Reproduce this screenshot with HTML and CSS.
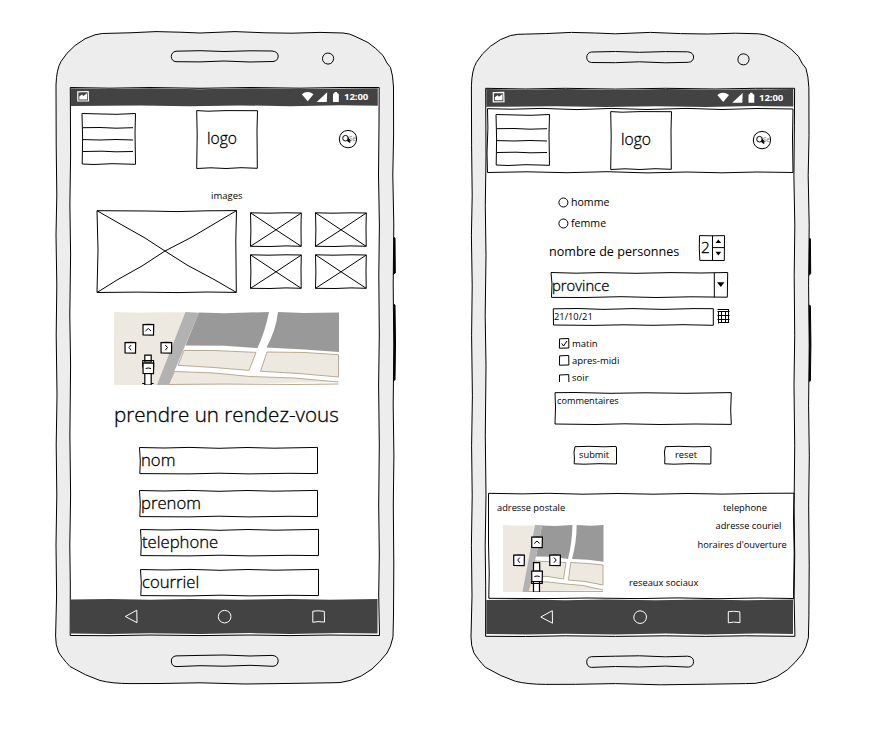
FILE: index.html
```
<!DOCTYPE html>
<html lang="fr">
<head>
<meta charset="utf-8">
<title>Maquette mobile</title>
<link rel="stylesheet" href="styles.css">
</head>
<body>
<svg class="defs" width="0" height="0" aria-hidden="true">
  <defs>
    <g id="shell">
      <path fill="#000" d="M343 212.500l2 .5 .3 35-2 1.500zM343 279l2 1 .5 38-.5 37-2 .5z"/>
      <path class="case" d="M6 60Q6.500 44 11 36.500Q16 28 25 20.500Q35 12.500 45 9.800Q52 8 60 8.300L80 7.800 106 6.600 130 7.200 150 8 185 6.600 215 7.800 242 8.200 270 7.400 293 8Q300 8.500 305 11.300L318 17.500Q326 23 333 30.500L337 38 340.500 42.500Q343 50 343.500 62L343.600 110 342.800 150 343.800 200 343.200 260 343.800 320 343.200 380 343.900 430 343.300 480 343.800 540 343.500 590 343 612Q341 622 337 628Q330 637 322 644Q312 652 300 655.500Q290 658.500 280 657.800L242 658.400 195 659 150 657.800 110 658.500 80 658.600Q62 658.500 50 655.500Q36 651 20 641.500Q12 633 8.500 627Q5.500 620 5.600 611L6.600 570 6 520 6.800 470 6.200 420 7 370 6.200 310 6.800 260 6 210 6.800 170 6.200 120z"/>
      <path d="M126 26.200L150 25.700 174 26.500 200 25.800 222 26Q228 26.500 228.200 31.200Q228 36 223 36.500L200 37 174 36 150 36.900 126 36.700Q121.300 36 121.300 31.500Q121.500 27 126 26.200zM126 630.900L150 630.400 174 630 200 631 222 630.400Q228 630.800 228.200 635.800Q228 640.800 223 641.300L200 640.300 174 641.200 150 640.700 126 641.600Q121.300 641 121.300 636Q121.500 631.500 126 630.900zM277.800 28Q283.500 28.500 283.700 33.500Q283 38.900 278 39.100Q272.500 38.500 272.500 33.500Q273 28.500 277.800 28z"/>
      <path class="white" d="M20.300 62.500L60 63.200 100 62.500 150 63.300 200 62.500 250 63.200 290 62.500 329.200 62.500 329 100 328.500 150 329.400 200 328.800 250 329.300 310 328.600 360 329.300 420 328.700 480 329.300 530 328.700 570 329.500 610.500 280 610 240 610.600 200 610 150 610.600 100 610 60 610.700 20.200 610.500 20.300 560 19.800 520 20.600 470 19.900 410 20.600 340 19.800 290 20.600 230 19.900 180 20.600 130z"/>
    </g>
    <g id="status">
      <path class="darkbar" d="M.8 1.300L40 2 80 1.200 130 2.200 180 1.200 230 2 307.800 1.300 307.800 18.800 270 18.300 220 19.200 170 18.400 120 19.200 70 18.500 .8 19z"/>
      <path fill="none" stroke="#fff" stroke-width="1.200" d="M7.800 4.800l10.400-.3 .3 9.300-10.700 .2z"/>
      <path fill="#fff" stroke="none" d="M9.300 12.500V9.500L12 7.500 13.500 9 17 6.200V12.500zM231.800 7.200Q237.500 2.800 243.500 7.200L237.700 14.300zM246.700 15L257.200 5.200 256.800 15zM263 15V7L264.500 6V5H267V6L268.800 7V15z"/>
    </g>
    <g id="nav">
      <path class="darkbar" d="M.8 .5L40 0 80 .7 120 0 170 .8 220 0 260 .7 307.500 0 307.500 34.500 270 34 220 34.900 180 34.100 130 35 80 34.200 40 35 .8 34.500z"/>
      <path fill="none" stroke="#fff" d="M55.300 17.500L66.800 11.200 67 23.700zM154.500 11.300Q160.700 12 161 17.500Q160.500 23.500 154.500 24Q148.300 23 148.300 17.500Q149 11.800 154.500 11.300zM242.800 12.200L248 11.800 254.300 12.300 254.500 23.100 248 22.600 242.800 23.300z"/>
    </g>
    <path id="menu" d="M0 .5L20 1 35 1.300 53.500 .5 53 20 53.500 51.300 30 50.700 12 51.500 .2 51 .6 25zM1 14.700L18 14.500 34 15.200 51 14.700M1 26.600L18 27 34 26.500 51 27M1 38.500L20 38.200 34 38.800 51 38.500"/>
    <path id="logo" d="M.7 .6L12 1.200 30 .6 61.500 .7 61 20 61.300 58.300 45 57.700 30 58.500 15 57.800 .7 58.500 1.200 25z"/>
    <g id="search">
      <path d="M10 1.400Q18.500 2 18.600 10Q18 18.500 10 18.800Q1.500 18 1.300 10Q2 2 10 1.400z"/>
      <circle cx="7.500" cy="9.200" r="2.800"/><path stroke-width="1.500" d="M9.500 11.200L12.200 13.500"/><path fill="#000" stroke="none" d="M9.500 8L9.800 12.500 13.500 12z"/>
    </g>
    <path id="thumb" d="M.5 .8L18 1.200 36 .8 51.300 1 51 15 51.200 34.300 36 33.900 20 34.500 .5 34.300 .9 18zM.5 .8L26 17.800 51.200 34.300M51.300 1L26 17.800 .5 34.300"/>
    <path id="field" d="M.5 .5L25 1 50 .4 80 1.300 108 .5 135 1.200 178.500 .4V26.600L150 26.300 110 26.900 80 26.200 50 26.900 .8 26.600 1.300 14z"/>
    <path id="tick" d="M.6 .8L9.700 .5 9.900 10 .4 10.200z"/>
    <path id="pan" class="white" stroke-width="1.200" d="M.5 .6L6 .3 11.200 .6 11 11.200 .6 11z"/>
  </defs>
</svg>
<main class="board">
  <section class="phone">
    <svg class="shell" width="350" height="665"><use href="#shell"/></svg>
    <div class="screen">
      <div class="status"><svg class="back" width="309" height="19"><use href="#status"/></svg><span>12:00</span></div>
      <div class="content">
        <header class="top">
          <svg class="menu" width="54" height="52"><use href="#menu"/></svg>
          <div class="logo"><svg class="back" width="62" height="60"><use href="#logo"/></svg>logo</div>
          <div class="search"><svg class="back" width="20" height="20"><use href="#search"/></svg><span>Se</span></div>
        </header>
        <p class="caption">images</p>
        <div class="gallery">
          <svg width="140" height="83"><path d="M0 .7L50 1 80 1.600 110 .8 139.500 .6 138.800 30 139.300 82.400 110 82 80 82.600 40 82.100 0 82.500 1 40zM0 .7L25 15 48 28 68 41 90 55 118 70 139.300 82.400M139.500 .6L95 27 68 41 45 56 20 70 0 82.500"/></svg>
          <div class="thumbs">
            <svg width="52" height="35"><use href="#thumb"/></svg>
            <svg width="52" height="35"><use href="#thumb"/></svg>
            <svg width="52" height="35"><use href="#thumb"/></svg>
            <svg width="52" height="35"><use href="#thumb"/></svg>
          </div>
        </div>
        <svg class="map" width="225" height="73">
          <g stroke="none">
            <path fill="#ede8e0" d="M0 0L25 .8 50 .3H72V73H0z"/>
            <path fill="#fff" d="M80 0H225V73H54z"/>
            <path fill="#b2b2b2" d="M71.500 0L85 .7 54.500 73H43z"/>
            <path fill="#999" d="M85 .5L110 1.200 155 0Q151 20 143.500 36L110 33.800 71.500 33.500zM164 0L190 1 225 .4V40L190 37.500 152.500 35.500Q162 18 164 0z"/>
          </g>
          <path class="plot" d="M70 38.500L100 38.500 142 40.400 135 58.400 100 55.500 64 53.300zM153 40L190 40.500 224.500 42.700V65L185 61.500 146.500 59.300zM54.500 72.500L60.500 59.500 100 61 136 64.500 180 66 224.500 70M55 72.500L110 72 180 72.500 224.500 72"/>
          <use href="#pan" x="28.500" y="12"/><use href="#pan" x="10.500" y="30"/><use href="#pan" x="46.500" y="30"/>
          <path class="white" stroke-width="1.200" d="M28.800 48.500H39.500V55H28.800zM30.800 43.200H37.200V50H30.800zM30.800 60H37.200V73H30.800zM28.800 72V71.500H30.500M37 71.500H39.500"/>
          <use href="#pan" x="28.500" y="50.500"/>
          <path d="M31.500 19L34.300 16.500 37 19M17.200 33L15 35.500 17.200 38.300M51.200 33L53.500 35.500 51.200 38.300M31.700 56.500Q34.300 55.500 37 56.500"/>
        </svg>
        <h1>prendre un rendez-vous</h1>
        <div class="fields">
          <div class="field"><svg class="back" width="179" height="28"><use href="#field"/></svg>nom</div>
          <div class="field second"><svg class="back" width="179" height="28"><use href="#field"/></svg>prenom</div>
          <div class="field shifted"><svg class="back" width="179" height="28"><use href="#field"/></svg>telephone</div>
          <div class="field shifted last"><svg class="back" width="179" height="28"><use href="#field"/></svg>courriel</div>
        </div>
      </div>
      <svg class="nav" width="309" height="36"><use href="#nav"/></svg>
    </div>
  </section>

  <section class="phone">
    <svg class="shell" width="350" height="665"><use href="#shell" transform="translate(.4 .8)"/></svg>
    <div class="screen">
      <div class="status low"><svg class="back" width="309" height="20"><use href="#status" transform="translate(.5 .8)"/></svg><span>12:00</span></div>
      <div class="content">
        <header class="top boxed">
          <svg class="back" width="308" height="66"><path d="M.5 .7L25 1.200 55 .4 90 1.600 125 .4 160 1.500 200 .4 235 1.500 270 .5 306 1 305.500 30 306 64.500 270 64 235 64.800 200 64 160 64.900 120 63.700 80 64.700 40 63.800 .5 64.500 0 45 .9 20z"/></svg>
          <svg class="menu" width="54" height="52"><use href="#menu"/></svg>
          <div class="logo"><svg class="back" width="62" height="60"><use href="#logo"/></svg>logo</div>
          <div class="search"><svg class="back" width="20" height="20"><use href="#search"/></svg><span>Se</span></div>
        </header>
        <div class="radios">
          <label><svg width="11" height="11"><circle cx="5.400" cy="5.500" r="4.500"/></svg>homme</label>
          <label><svg width="11" height="11"><circle cx="5.400" cy="5.500" r="4.500"/></svg>femme</label>
        </div>
        <div class="count">
          <span class="label">nombre de personnes</span>
          <div class="spinner"><svg class="back" width="26" height="27"><path d="M.5 .6L14 .8 25.500 .6 25.300 25.500 .8 25.400 .3 13zM13.500 .7V25.500M13.500 12.600H25.500"/><path class="solid" d="M16.500 8L19.300 4.500 22.200 8zM16.500 16.800L19.300 20.500 22.200 16.800z"/></svg>2</div>
        </div>
        <div class="select"><svg class="back" width="178" height="26"><path d="M0 .5L25 1.200 50 .6 85 1.300 120 .6 150 1 176.700 .5 176.300 25.200 140 24.800 105 25.500 70 24.700 35 25.500 .5 25.400 1 12zM163.300 .7V25.400"/><path class="solid" d="M166 10.300H173.500L169.800 15z"/></svg>province</div>
        <div class="date">
          <div class="dateinput"><svg class="back" width="162" height="18"><path d="M.3 .8L25 .5 50 1.400 80 .6 110 1.400 140 .6 160.300 .7V17.300L130 16.700 100 17.300 70 16.800 40 17.400 .5 17z"/></svg>21/10/21</div>
          <svg class="calendar" width="13" height="16"><path d="M.5 1.500H12M1.500 4V15.500M.5 3.500H12.500M.5 7.500H12.500M.5 11.500H12.500M1 14.500H12M4.500 3.500V14.500M8.500 3.500V14.500M11.500 1V14.500"/></svg>
        </div>
        <div class="checks">
          <label><svg width="11" height="11"><use href="#tick"/><path d="M2.700 5.500L4.500 8 8 3"/></svg>matin</label>
          <label><svg width="11" height="11"><use href="#tick"/></svg>apres-midi</label>
          <label><svg width="11" height="11"><path d="M.5 9V2L9.700 1.600 9.900 9"/></svg>soir</label>
        </div>
        <div class="comment"><svg class="back" width="178" height="33"><path d="M0 .7L20 .5 55 1.300 90 .8 130 1.300 176.300 .6 175.700 18 176.300 32.400 140 32 105 32.500 70 31.800 40 32.500 0 32 .5 15z"/></svg>commentaires</div>
        <div class="buttons">
          <div class="button"><svg class="back" width="44" height="19"><path d="M1 .7L15 .3 30 .8 42 .4 42.500 2V18L25 17.700 10 18.200 .2 17.800 .4 12 0 6z"/></svg>submit</div>
          <div class="button reset"><svg class="back" width="48" height="19"><path d="M1.500 .7L15 .3 30 .8 46 .4 47 2 46.800 18 25 17.700 10 18.200 .7 17.800 .9 12 .4 6z"/></svg>reset</div>
        </div>
        <footer class="foot">
          <svg class="back" width="307" height="106"><path d="M.5 .3L35 .9 60 .3 95 1.200 130 .5 165 1.200 200 .5 235 1.100 275 .3 306 .2 305.500 25 306.200 60 305.500 105.500 270 105 230 105.700 190 104.900 150 105.600 100 105 60 105.600 .8 105.300 1.200 80 .5 50z"/></svg>
          <div class="address">
            <span>adresse postale</span>
            <svg class="map" width="101" height="67">
              <g stroke="none">
                <path fill="#ede8e0" d="M0 0L15 .8 38 0V67H0z"/><path fill="#fff" d="M38 0H101V67H26z"/>
                <path fill="#b2b2b2" d="M32 0H39L26 67H19.500z"/>
                <path fill="#999" d="M39 .5L52 1 69.500 0Q69 18 65 34L50 31.800 33 31.500zM73.700 0L88 .7 100.500 0V36.700L85 34.700 69 34Q73.500 18 73.700 0z"/>
              </g>
              <path class="plot" d="M32 36L63 37.500 60.500 54 45 51.500 29 51zM67.700 37.500L85 38.500 100 40V60L82 56.500 65.500 55zM25 66.500L28 56 45 57 63 59 80 60.500 100 65M25 66.500H100"/>
              <path class="white" stroke-width="1.200" d="M30.500 37.700H36.700V47H30.500zM28.700 56V58.500H39.200V56M30.500 56.500V67H36.500V56.500z"/>
              <use href="#pan" x="28.200" y="11.500"/><use href="#pan" x="10.200" y="29.500"/><use href="#pan" x="46.200" y="29.500"/><use href="#pan" x="28.200" y="45.500"/>
              <path d="M31.200 18.500L34 16 36.700 18.500M16.900 32.500L14.700 35 16.900 37.800M50.900 32.500L53.200 35 50.900 37.800M31.400 51.500Q34 50.500 36.700 51.500"/>
            </svg>
          </div>
          <span class="social">reseaux sociaux</span>
          <div class="contact">
            <span>telephone</span>
            <span class="mail">adresse couriel</span>
            <span class="hours">horaires d'ouverture</span>
          </div>
        </footer>
      </div>
      <svg class="nav" width="309" height="36"><use href="#nav" transform="translate(.5 .5)"/></svg>
    </div>
  </section>
</main>
</body>
</html>
```
FILE: styles.css
```
* { box-sizing: border-box; }
body { margin: 0; background: #fff; color: #000; font: 9.3px/14px "Open Sans", "Noto Sans", sans-serif; overflow: hidden; }
p, h1 { margin: 0; }
svg { display: block; flex: none; overflow: visible; fill: none; stroke: #000; stroke-width: 1; }
.defs { position: absolute; }
.case { fill: #ededed; }
.white { fill: #fff; }
.solid { fill: #000; stroke: none; }
.darkbar { fill: #434343; stroke: none; }
.plot { fill: #ede8e0; stroke: #b9aa94; }
.map { overflow: hidden; }

.board { display: flex; gap: 65px; width: 885px; height: 731px; padding: 25px 0 0 50px; }
.phone { position: relative; width: 350px; height: 665px; padding: 62px 0 0 20px; flex: none; }
.shell { position: absolute; left: 0; top: 0; }
.screen { position: relative; display: flex; flex-direction: column; width: 309px; height: 549px; }
.back { position: absolute; left: 0; top: 0; z-index: -1; }
.screen, .status, .logo, .search, .field, .top, .spinner, .select, .dateinput, .comment, .button, .foot { isolation: isolate; }

.status { position: relative; height: 19px; padding-left: 274px; color: #fff; font-size: 9.6px; font-weight: 700; line-height: 20px; letter-spacing: -.1px; }
.status.low { line-height: 21px; }
.content { display: flex; flex-direction: column; height: 493px; }

/* Larger labels: light face with a slight stroke for a medium-light weight */
.logo, .field, .spinner, .select, h1 { font-weight: 300; -webkit-text-stroke: .3px #000; }

.top { position: relative; display: flex; align-items: flex-start; height: 66px; padding: 4px 0 0 12px; flex: none; }
.top .menu { margin-top: 3px; }
.logo { position: relative; width: 62px; height: 60px; margin-left: 60px; padding-left: 11px; font-size: 15.6px; line-height: 57px; }
.search { position: relative; width: 20px; height: 20px; margin: 19px 0 0 80px; padding-left: 11px; color: #777; font-size: 6.5px; line-height: 20px; }
.boxed { width: 307px; height: 65px; margin: 2px 0 0 2px; padding: 3px 0 0 9px; }

.caption { margin-top: 17px; padding-left: 141px; font-size: 9.5px; }
.gallery { display: flex; margin-top: 7px; padding-left: 27px; height: 83px; }
.thumbs { display: grid; grid-template-columns: 52px 52px; grid-template-rows: 35px 35px; gap: 7px 12.500px; margin: 2px 0 0 13px; }
.content > .map { margin: 19px 0 0 44px; }
h1 { margin-top: 15px; padding-left: 44px; font-size: 20.6px; line-height: 28px; white-space: nowrap; }
.fields { padding: 19px 0 0 69px; }
.field { position: relative; width: 179px; height: 28px; padding-left: 2px; font-size: 16.7px; line-height: 26px; }
.field.second { margin-top: 15px; }
.field.shifted { margin: 11px 0 0 1px; }
.field.shifted.last { margin-top: 12px; }

.radios { display: flex; flex-direction: column; gap: 1px; padding: 19px 0 0 73px; }
.radios label { display: flex; align-items: center; gap: 2px; height: 20px; font-size: 10.6px; }
.count { display: flex; margin-top: 2px; padding-left: 64px; height: 26px; }
.count .label { width: 150px; margin-top: 4px; font-size: 12.6px; line-height: 26px; white-space: nowrap; }
.spinner { position: relative; width: 26px; padding-left: 2px; font-size: 15.4px; line-height: 25px; }
.select { position: relative; width: 178px; height: 26px; margin: 11px 0 0 66px; padding-left: 1px; font-size: 14.8px; line-height: 27px; }
.date { display: flex; gap: 2px; margin: 10px 0 0 68px; }
.dateinput { position: relative; width: 162px; height: 18px; padding-left: 1px; line-height: 17px; }
.calendar { margin-left: -.5px; }
.checks { display: flex; flex-direction: column; padding: 9px 0 0 74px; font-size: 9.5px; }
.checks label { display: flex; align-items: center; gap: 2px; height: 17.3px; }
.comment { position: relative; width: 178px; height: 33px; margin: 5px 0 0 70px; padding: 2px 0 0 2px; font-size: 9.2px; }
.buttons { display: flex; gap: 46px; margin: 21px 0 0 89px; }
.button { position: relative; width: 44px; height: 19px; padding-left: 5px; line-height: 17px; }
.button.reset { width: 48px; padding-left: 11px; }
.foot { position: relative; display: flex; width: 306px; height: 106px; margin: auto 0 0 3px; padding: 8px 0 0 9px; white-space: nowrap; }
.address { width: 132px; }
.address .map { margin: 10px 0 0 5.500px; }
.social { width: 69px; padding-top: 75px; }
.contact { display: flex; flex-direction: column; gap: 4px; padding-left: 25px; }
.contact .mail { margin-left: -7.500px; }
.contact .hours { margin: 1px 0 0 -25.500px; }
```
